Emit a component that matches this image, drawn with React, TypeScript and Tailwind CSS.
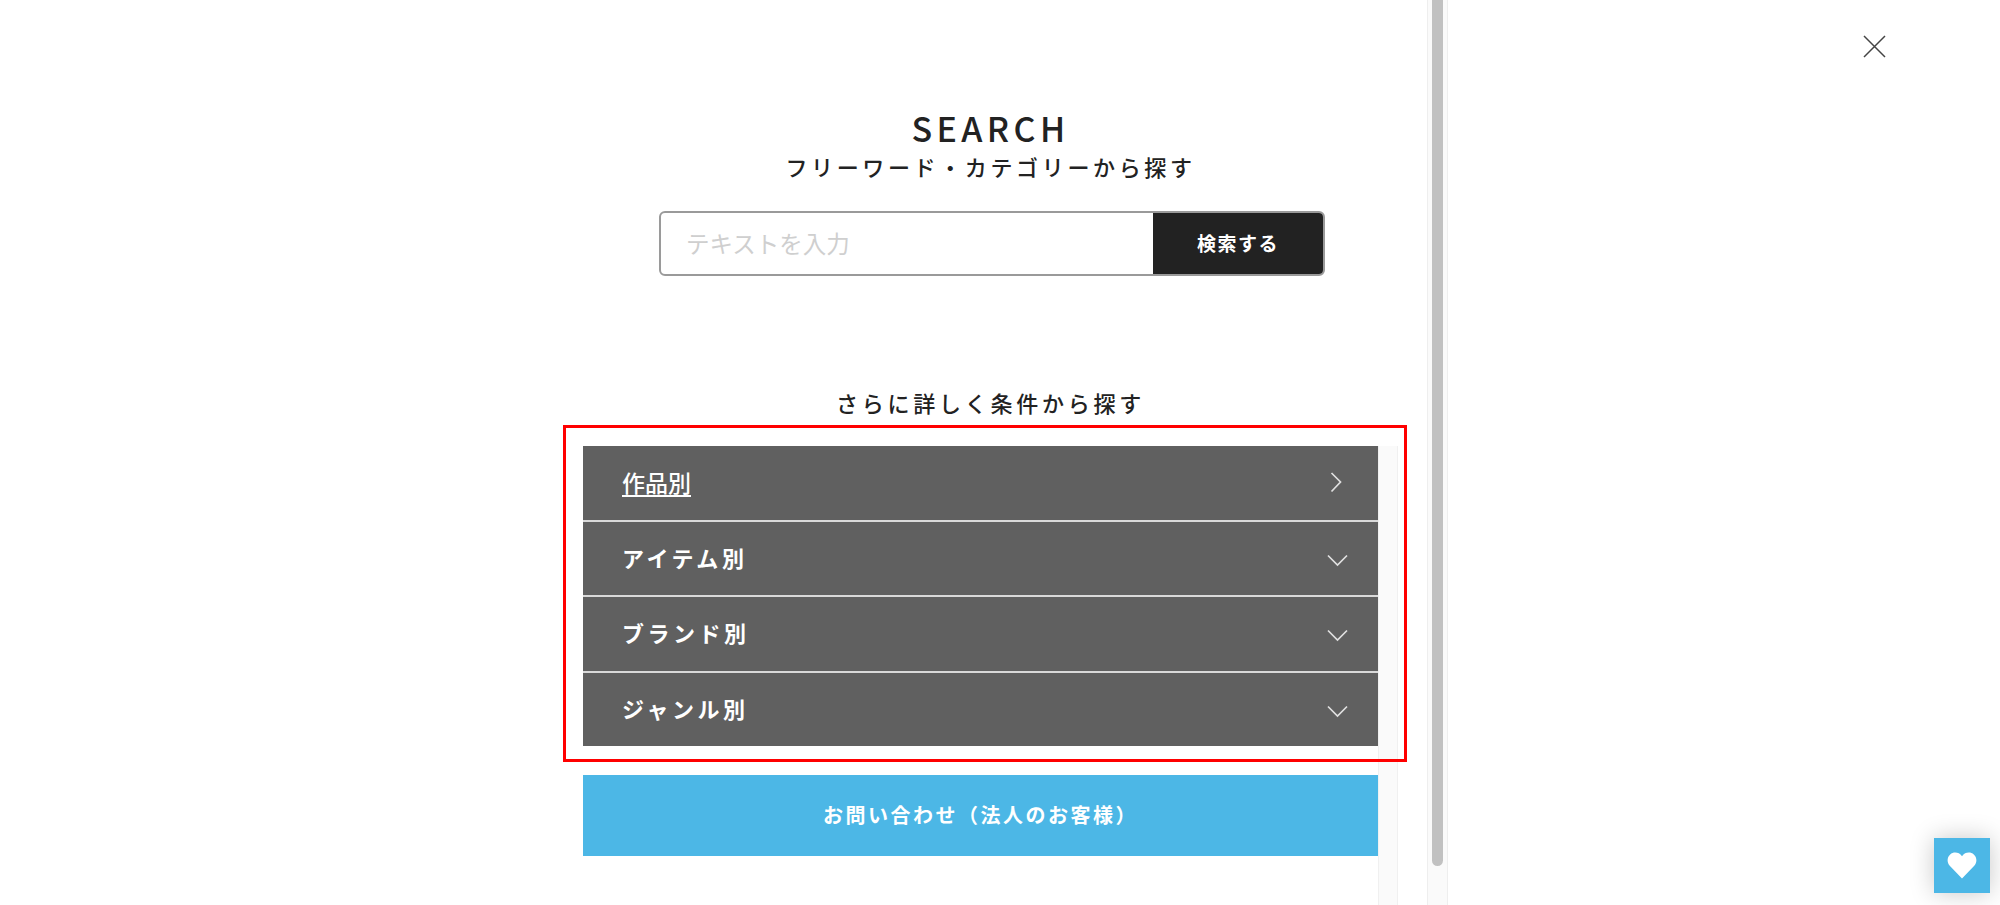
const font = "font-['Noto_Sans_CJK_JP','Noto_Sans',sans-serif]";

const rows = [
  { label: "アイテム別" },
  { label: "ブランド別" },
  { label: "ジャンル別" },
];

function ChevronRight() {
  return (
    <svg width="12" height="21" viewBox="0 0 12 21" fill="none" stroke="#e0e0e0" strokeWidth="1.7">
      <path d="M1.5 1 L10.5 10 L1.5 19.5" />
    </svg>
  );
}

function ChevronDown() {
  return (
    <svg width="21" height="13" viewBox="0 0 21 13" fill="none" stroke="#e0e0e0" strokeWidth="1.7">
      <path d="M1 1.5 L10.5 11 L20 1.5" />
    </svg>
  );
}

export default function App() {
  return (
    <div className={`relative flex h-[905px] w-[2000px] overflow-hidden bg-white text-[#222] ${font}`}>
      <main className="w-[1427px] shrink-0 pl-[583px]">
        <div className="w-[815px] text-center">
          <h1 className="mt-[105px] text-[34px] leading-[46px] font-medium tracking-[0.13em]">SEARCH</h1>
          <p className="-mt-px text-[22px] leading-[32px] font-medium tracking-[0.165em]">フリーワード・カテゴリーから探す</p>

          {/* Search form */}
          <div className="mt-[29px] ml-[76px] flex h-[65px] w-[666px] overflow-hidden rounded-[6px] border-2 border-[#9a9a9a]">
            <div className="flex flex-1 items-center pl-[25px] text-[23.5px] text-[#cfcfcf]">テキストを入力</div>
            <button className="-my-[2px] -mr-[2px] w-[172px] pr-[2px] bg-[#222] text-[19px] font-bold tracking-[0.08em] text-white">検索する</button>
          </div>

          <p className="mt-[110px] text-[22px] leading-[32px] font-medium tracking-[0.17em]">さらに詳しく条件から探す</p>
        </div>

        {/* Accordion with its own scrollbar strip */}
        <div className="mt-[28px] flex h-[459px] w-[815px]">
          <div className="w-[795px] shrink-0">
            <div className="flex h-[74px] items-center justify-between bg-[#606060] pr-[36px] pl-[39px] text-white">
              <a className="-mt-[2px] text-[23px] font-medium underline underline-offset-3">作品別</a>
              <span className="-mt-[1px] flex"><ChevronRight /></span>
            </div>
            {rows.map((row) => (
              <div
                key={row.label}
                className="flex h-[75.3px] items-center justify-between border-t-2 border-[#d9d9d9] bg-[#606060] pr-[30px] pl-[39px] text-white"
              >
                <span className="-mt-[2px] text-[22px] font-bold tracking-[0.16em]">{row.label}</span>
                <span className="mt-[4px] flex"><ChevronDown /></span>
              </div>
            ))}
            <a className="mt-[29px] flex h-[81px] items-center justify-center bg-[#4cb7e6] text-[20px] font-bold tracking-[0.125em] text-white">
              {"お問い合わせ\uFF08法人のお客様\uFF09"}
            </a>
          </div>
          <div className="w-[20px] shrink-0 border-x border-[#f0f0f0] bg-[#fafafa]" />
        </div>
      </main>

      {/* Outer scrollbar */}
      <div className="h-full w-[21px] shrink-0 border-x border-[#eeeeee] bg-[#fafafa] px-[4px]">
        <div className="h-[866px] w-[11px] rounded-b-[6px] bg-[#c1c1c1]" />
      </div>

      {/* Red annotation box */}
      <div className="pointer-events-none absolute top-[425px] left-[563px] h-[337px] w-[844px] border-[3px] border-[#ff0000]" />

      <button className="absolute top-[35px] left-[1863px]">
        <svg width="23" height="23" viewBox="0 0 23 23" fill="none" stroke="#444" strokeWidth="1.5" className="block">
          <path d="M1 1 L22 22 M22 1 L1 22" />
        </svg>
      </button>

      <button className="absolute top-[838px] left-[1934px] flex h-[55px] w-[56px] items-center justify-center bg-[#4cb7e6] shadow-[0_0_24px_rgba(0,0,0,0.22)]">
        <svg width="30" height="27" viewBox="0 0 24 22" fill="#fff">
          <path d="M12 21.5 L2.2 11.5 C-0.6 8.6 -0.2 4.2 2.4 2 C5 -0.3 9.5 -0.1 12 3.4 C14.5 -0.1 19 -0.3 21.6 2 C24.2 4.2 24.6 8.6 21.8 11.5 Z" />
        </svg>
      </button>
    </div>
  );
}
